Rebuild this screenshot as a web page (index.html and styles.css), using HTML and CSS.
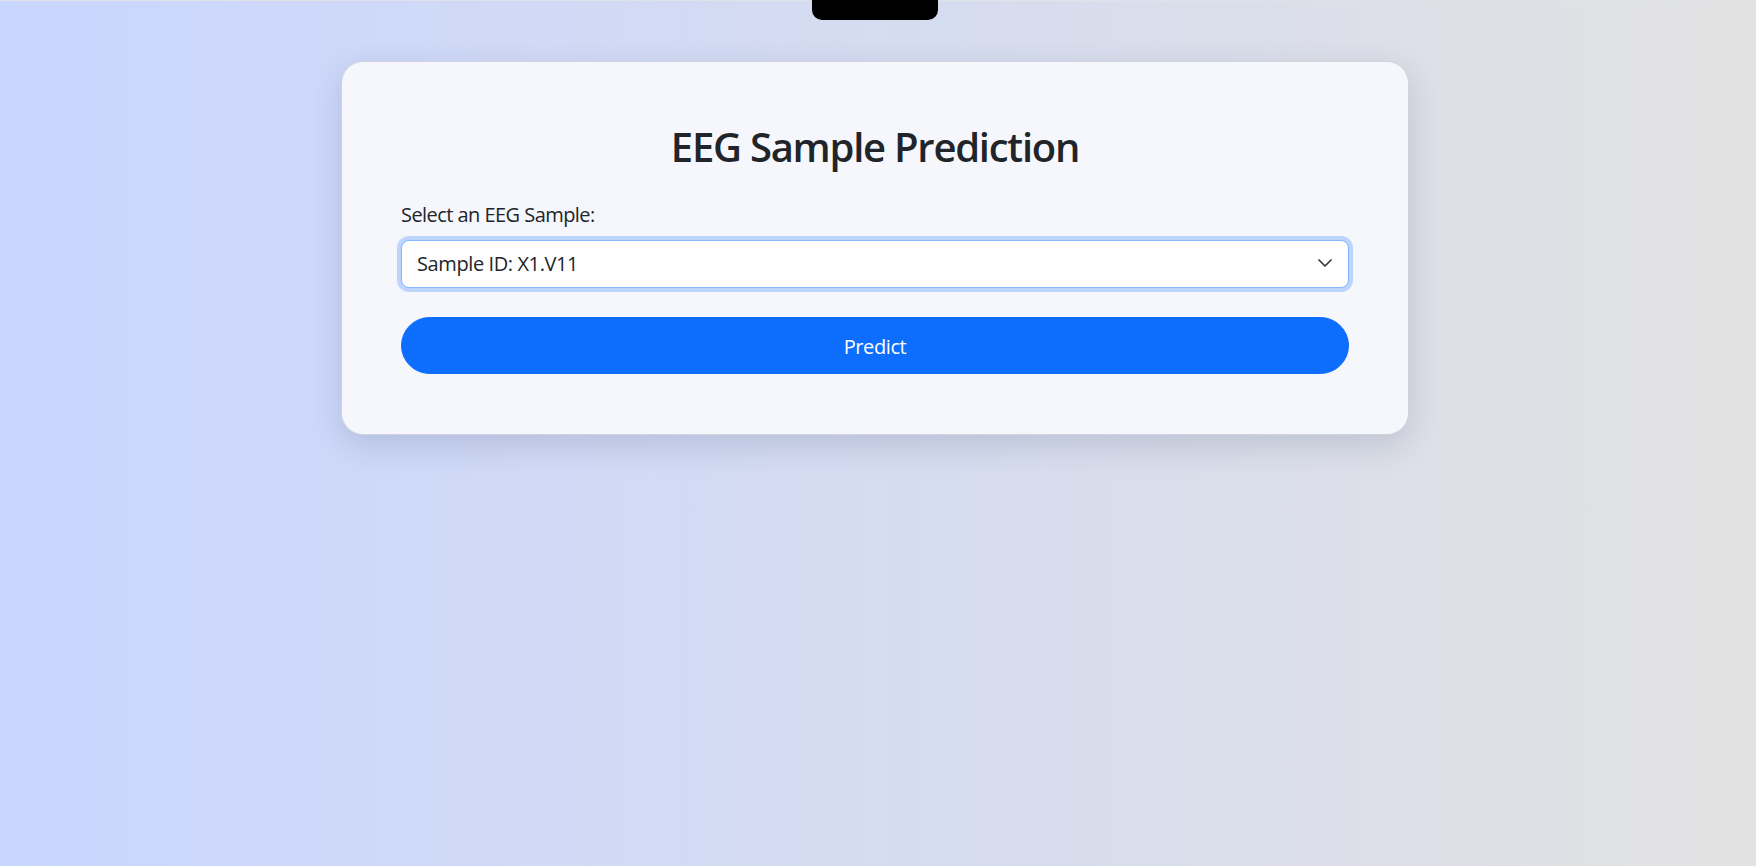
FILE: index.html
```html
<!DOCTYPE html>
<html lang="en">
<head>
<meta charset="utf-8">
<title>EEG Sample Prediction</title>
<link rel="stylesheet" href="styles.css">
</head>
<body>
<div class="topline"></div>
<div class="notch"></div>
<main class="page">
  <section class="card">
    <h1 class="title">EEG Sample Prediction</h1>
    <form class="form">
      <label class="label" for="sample">Select an EEG Sample:</label>
      <div class="select-wrap">
        <select id="sample" class="select is-focused">
          <option>Sample ID: X1.V11</option>
        </select>
        <svg class="chevron" viewBox="0 0 14 8" width="14" height="8" aria-hidden="true">
          <path d="M1 1 L7 7 L13 1" fill="none" stroke="#343a40" stroke-width="1.7" stroke-linecap="round" stroke-linejoin="round"/>
        </svg>
      </div>
      <button type="button" class="btn">Predict</button>
    </form>
  </section>
</main>
</body>
</html>
```

FILE: styles.css
```css
* { box-sizing: border-box; }

html, body {
  margin: 0;
  height: 100%;
}

body {
  min-height: 866px;
  background: linear-gradient(to right, #c9d6ff, #e2e2e2);
  font-family: "Open Sans", "Noto Sans", "Liberation Sans", sans-serif;
  color: #212529;
  overflow: hidden;
}

.topline {
  position: absolute;
  top: 0;
  left: 0;
  right: 0;
  height: 1px;
  background: #dfe3e8;
}

.notch {
  position: absolute;
  top: 0;
  left: 812px;
  width: 126px;
  height: 20px;
  background: #000;
  border-radius: 0 0 10px 10px;
}

.page {
  display: flex;
  justify-content: center;
  padding: 61px 6px 0 0;
}

.card {
  width: 1068px;
  background: #f6f7fc;
  border: 1px solid #cfd3df;
  border-radius: 22px;
  box-shadow: 0 10px 32px rgba(40, 50, 90, 0.16);
  padding: 61px 59px 60px 59px;
}

.title {
  margin: 0 0 29px 0;
  font-size: 40px;
  line-height: 48px;
  font-weight: 600;
  text-align: center;
  letter-spacing: -1.25px;
}

.form {
  display: flex;
  flex-direction: column;
}

.label {
  font-size: 20px;
  line-height: 30px;
  margin-bottom: 10px;
  letter-spacing: -0.55px;
}

.select-wrap {
  position: relative;
  margin-bottom: 29px;
}

.select {
  display: block;
  width: 100%;
  height: 48px;
  appearance: none;
  -webkit-appearance: none;
  font-family: inherit;
  font-size: 20px;
  line-height: 30px;
  color: #212529;
  background: #fff;
  border: 1px solid #dee2e6;
  border-radius: 8px;
  padding: 8px 48px 8px 15px;
  letter-spacing: -0.4px;
  outline: none;
}

.select.is-focused {
  border-color: #86b7fe;
  box-shadow: 0 0 0 4px rgba(13, 110, 253, 0.25);
}

.chevron {
  position: absolute;
  right: 17px;
  top: 19px;
  pointer-events: none;
}

.btn {
  display: block;
  width: 100%;
  height: 57px;
  font-family: inherit;
  font-size: 20px;
  line-height: 30px;
  color: #fff;
  background: #0d6efd;
  border: 1px solid #0d6efd;
  border-radius: 29px;
  padding: 14px 16px 11px 16px;
  letter-spacing: -0.4px;
  cursor: pointer;
}
```
